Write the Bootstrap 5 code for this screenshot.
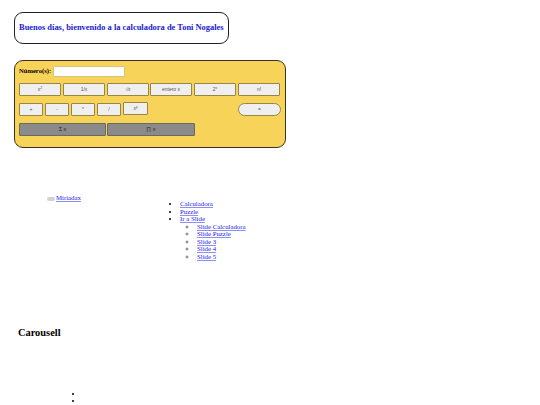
<!DOCTYPE html>
<html lang="es">
<head>
<meta charset="utf-8">
<title>Calculadora</title>
<link href="https://cdn.jsdelivr.net/npm/bootstrap@5.3.0/dist/css/bootstrap.min.css" rel="stylesheet">
<style>
html,body{background:#fff;height:405px;overflow:hidden}
body{font-family:"Liberation Serif",serif;font-size:6.8px;line-height:7.5px;color:#000}
a{color:#1a1aee;text-decoration:underline;text-decoration-color:#8f8ff0}
.saludo{margin:12px 0 0 14px;width:215px;height:32px;border:1px solid #222;border-radius:9px;color:#1a1ad6;font-size:8.45px;font-weight:700;padding-left:4px}
.calc{margin:16px 0 0 14px;width:272px;height:88px;background:#f8d35a;border:1px solid #3a3320;border-radius:9px;padding:4px 4px 0 4px}
.fila-num{height:12px;margin-bottom:6px;font-size:6.6px;font-weight:700}
.entrada{width:72px;height:11px;margin-left:2px;background:#fff;border:1px solid #d9c27c;border-radius:1px}
.fila{height:14px;margin-bottom:6px}
.paso-b{gap:2px}
.paso-c{gap:1px}
.tecla{height:13px;padding:0;font-family:"Liberation Sans",sans-serif;font-size:5px;line-height:11px;color:#555;background:#efefef;border:1px solid #9a8642;border-radius:1px;text-align:center}
.tecla sup{font-size:3.5px}
.w42{width:42px}.w24{width:24px}.w25{width:25px}
.junto{margin-left:-1px}
.alzado{margin-top:-1px}
.igual{width:43px;border-radius:7px}
.gris{background:#8a8a8a;border-color:#6a6a5a;color:#222;font-size:5.5px}
.g87{width:87px}.g88{width:88px}
.enlaces{margin-top:46px}
.miriadax{margin-left:47px;width:125px;gap:1px}
.pastilla{width:8px;height:4px;margin-top:3px;border-radius:2px;background:#d2d2d2}
.menu-a{margin:6px 0 0 0;padding:0 0 0 8px;list-style:disc}
.menu-b{margin:0;padding:0 0 0 17px;list-style:circle}
.menu-b ::marker{color:#777}
.titulo{margin:0 0 0 18px;padding-top:67px;font-family:"Liberation Serif",serif;font-size:10.4px;line-height:12px;font-weight:700}
.puntos{margin:51px 0 0 77px;padding:0 0 0 6px;font-size:7.5px;line-height:7.5px;list-style:disc}
.puntos li{height:7px}
</style>
</head>
<body>
<div class="saludo d-flex align-items-center">Buenos días, bienvenido a la calculadora de Toni Nogales</div>

<div class="calc">
  <div class="fila-num d-flex align-items-center">Número(s):<div class="entrada"></div></div>
  <div class="fila d-flex paso-b">
    <button class="tecla w42">x<sup>2</sup></button>
    <button class="tecla w42">1/x</button>
    <button class="tecla w42">√x</button>
    <button class="tecla w42 junto">entero x</button>
    <button class="tecla w42">2<sup>x</sup></button>
    <button class="tecla w42">n!</button>
  </div>
  <div class="fila d-flex justify-content-between">
    <div class="d-flex paso-b">
      <button class="tecla w24">+</button>
      <button class="tecla w24">-</button>
      <button class="tecla w24">*</button>
      <button class="tecla w24">/</button>
      <button class="tecla w25 alzado">x<sup>y</sup></button>
    </div>
    <button class="tecla igual">=</button>
  </div>
  <div class="fila d-flex paso-c">
    <button class="tecla gris g87">Σ x</button>
    <button class="tecla gris g88">∏ x</button>
  </div>
</div>

<div class="enlaces d-flex">
  <div class="miriadax d-flex align-items-start"><span class="pastilla"></span><a href="#">Miriadax</a></div>
  <ul class="menu-a">
    <li><a href="#">Calculadora</a></li>
    <li><a href="#">Puzzle</a></li>
    <li><a href="#">Ir a Slide</a>
      <ul class="menu-b">
        <li><a href="#">Slide Calculadora</a></li>
        <li><a href="#">Slide Puzzle</a></li>
        <li><a href="#">Slide 3</a></li>
        <li><a href="#">Slide 4</a></li>
        <li><a href="#">Slide 5</a></li>
      </ul>
    </li>
  </ul>
</div>

<h3 class="titulo">Carousell</h3>
<ul class="puntos"><li></li><li></li></ul>
<script src="https://cdn.jsdelivr.net/npm/bootstrap@5.3.0/dist/js/bootstrap.bundle.min.js"></script>
</body>
</html>
